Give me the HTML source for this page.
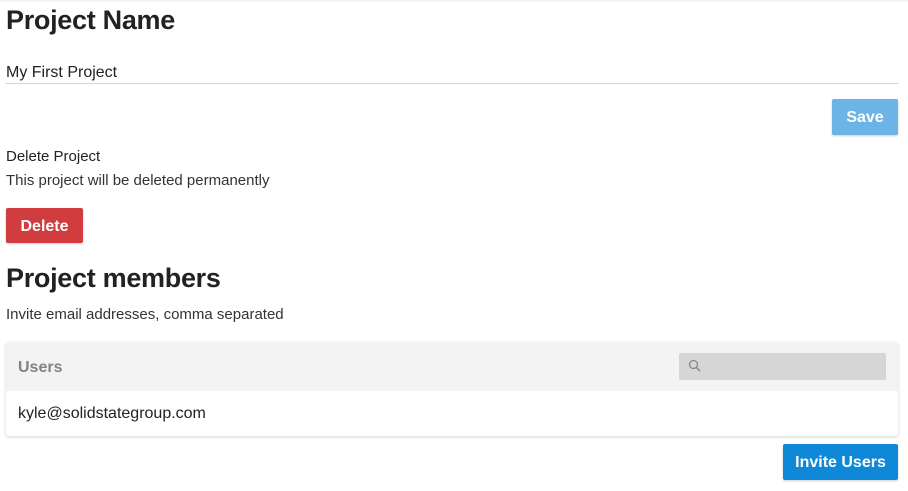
<!DOCTYPE html>
<html><head><style>
body{margin:0;width:908px;height:491px;background:#fff;font-family:"Liberation Sans",sans-serif;color:#222;position:relative;overflow:hidden}
.a{position:absolute;white-space:nowrap}
h1{margin:0;font-size:27px;font-weight:bold;letter-spacing:-0.3px}
.btn{position:absolute;color:#fff;font-weight:bold;font-size:16px;text-align:center;border-radius:2px;box-shadow:0 1px 2px rgba(0,0,0,.2)}
</style></head><body>
<div style="position:absolute;left:0;top:0;width:908px;height:2px;background:#f5f5f5"></div>
<h1 class="a" style="left:6px;top:5px">Project Name</h1>
<div class="a" style="left:6px;top:64px;font-size:16px">My First Project</div>
<div class="a" style="left:6px;top:83px;width:892px;height:1px;background:#d5d5d5"></div>
<div class="btn" style="left:832px;top:99px;width:66px;height:36px;line-height:38px;background:#6cb3e6">Save</div>
<div class="a" style="left:6px;top:148px;font-size:15px;color:#222">Delete Project</div>
<div class="a" style="left:6px;top:172px;font-size:15px;color:#333">This project will be deleted permanently</div>
<div class="btn" style="left:6px;top:208px;width:77px;height:35px;line-height:37px;background:#d13c3e">Delete</div>
<h1 class="a" style="left:6px;top:263px">Project members</h1>
<div class="a" style="left:6px;top:306px;font-size:15px;color:#333">Invite email addresses, comma separated</div>
<div class="a" style="left:6px;top:342px;width:892px;height:94px;border-radius:3px;box-shadow:0 1px 3px rgba(0,0,0,.18);background:#fff;overflow:hidden">
 <div style="position:absolute;left:0;top:0;width:892px;height:49px;background:#f3f3f3"></div>
 <div class="a" style="left:12px;top:17px;font-size:16px;font-weight:bold;color:#7d848c">Users</div>
 <div class="a" style="left:673px;top:11px;width:207px;height:27px;background:#d6d6d6;border-radius:2px">
  <svg width="14" height="14" style="position:absolute;left:9px;top:6px" viewBox="0 0 14 14"><circle cx="5.5" cy="5.5" r="4" fill="none" stroke="#888" stroke-width="1.3"/><path d="M8.5 8.5L12 12" stroke="#888" stroke-width="1.5"/></svg>
 </div>
 <div class="a" style="left:12px;top:63px;font-size:16px;color:#222">kyle@solidstategroup.com</div>
</div>
<div class="btn" style="left:783px;top:444px;width:115px;height:36px;line-height:38px;background:#0f88d8">Invite Users</div>
</body></html>
